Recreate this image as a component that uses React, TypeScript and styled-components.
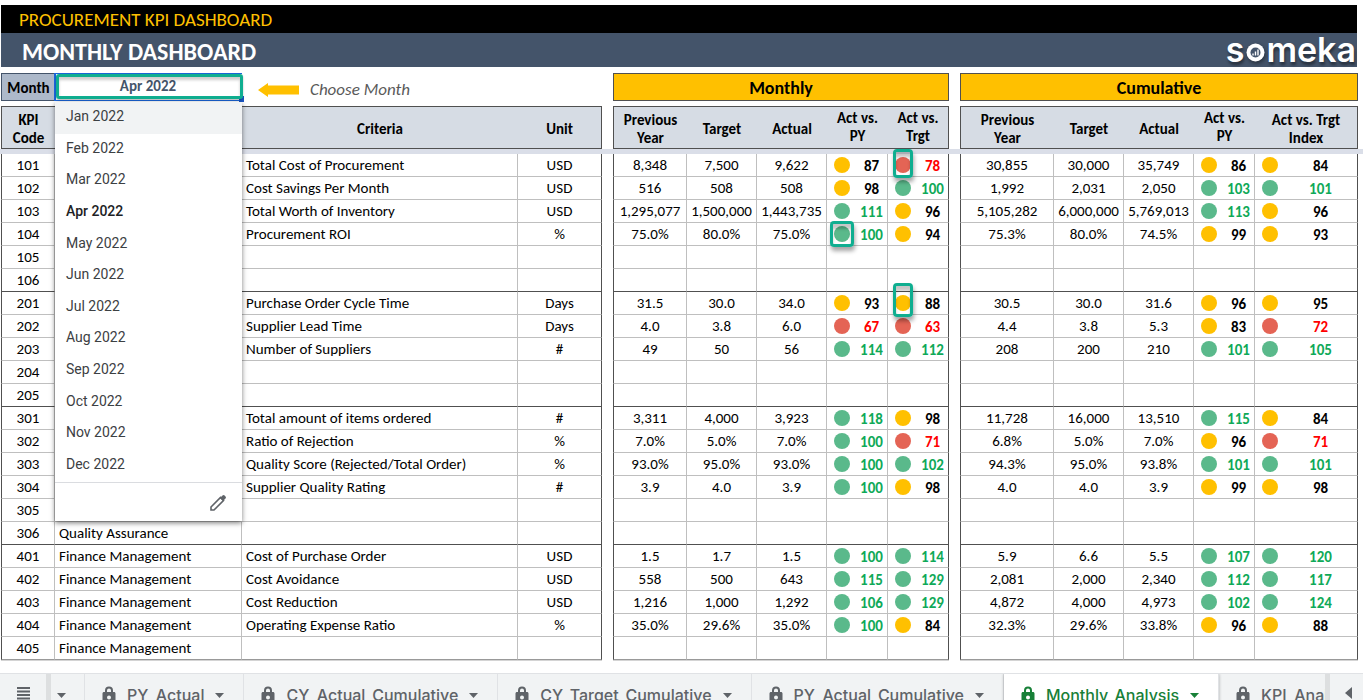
import React, { useState } from "react";
import styled, { createGlobalStyle, css } from "styled-components";

const GlobalStyle = createGlobalStyle`
  *, *::before, *::after { box-sizing: border-box; }
  body { margin: 0; background: #fff; }
  button, select { font: inherit; color: inherit; }
`;

const sheetFont = `Carlito, Calibri, Lato, "Open Sans", sans-serif`;
const line = "#bfbfbf";
const frame = "#505050";
const accent = "#0fae90";

const Page = styled.div`
  display: flex;
  flex-direction: column;
  height: 100vh;
  overflow: hidden;
  color: #000;
  font-family: ${sheetFont};
  font-size: 15px;
  line-height: 18px;
`;

const Banner = styled.header`
  margin: 5px 6px 0 1px;
  flex: none;
`;

const ProductBar = styled.div`
  display: flex;
  align-items: center;
  height: 28px;
  padding: 2px 18px 0;
  background: #000;
  color: #ffc000;
  font-size: 19px;
`;

const TitleBar = styled.div`
  display: flex;
  align-items: center;
  justify-content: space-between;
  height: 34px;
  padding-left: 21px;
  background: #44546a;
  color: #fff;
`;

const Title = styled.h1`
  margin: 0;
  padding-top: 4px;
  font-size: 24px;
  line-height: 30px;
`;

const Logo = styled.div`
  display: flex;
  align-items: center;
  padding-right: 1px;
  font: 600 34px/32px Inter, Lato, sans-serif;
  text-shadow: 1px 3px 3px rgba(0, 0, 0, 0.45);

  svg {
    margin: 4px 1px 0 2px;
    filter: drop-shadow(1px 2px 2px rgba(0, 0, 0, 0.45));
  }
`;

const Sheet = styled.main`
  display: grid;
  grid-template-columns: minmax(0, 601fr) minmax(0, 336fr) minmax(0, 398fr);
  column-gap: 11px;
  flex: none;
  margin-top: 6px;
  padding: 0 5px 0 1px;
  background: linear-gradient(#dadee8, #dadee8) 0 76px / 100% 5px no-repeat;
`;

const Panel = styled.section`
  display: flex;
  flex-direction: column;
  gap: 5px;
`;

const PanelTitle = styled.h2`
  display: flex;
  align-items: center;
  justify-content: center;
  height: 28px;
  margin: 0;
  padding-top: 1px;
  border: 1px solid ${frame};
  background: #ffc000;
  font-size: 18px;
`;

const Picker = styled.div`
  display: grid;
  grid-template-columns: 54fr 187fr 360fr;
  height: 28px;
`;

const MonthLabel = styled.label`
  display: flex;
  align-items: center;
  justify-content: center;
  padding-top: 1px;
  border: 1px solid #44546a;
  border-right: 0;
  background: #adb9ca;
  font-weight: 700;
`;

const MonthCell = styled.div`
  position: relative;
  z-index: 2;
  border: 1px solid #1a66d9;
  border-right: 0;
  box-shadow: -1px 0 #1a66d9;

  &::before {
    content: "";
    position: absolute;
    right: -2px;
    bottom: -2px;
    width: 5px;
    height: 6px;
    background: #1a56c4;
  }

  &::after {
    content: "";
    position: absolute;
    inset: 0 -1px 1px 0;
    border: 3px solid ${accent};
    border-radius: 3px;
    box-shadow: inset 0 3px 3px rgba(0, 0, 0, 0.2), 0 1px 2px rgba(0, 0, 0, 0.3);
    pointer-events: none;
  }
`;

const MonthSelect = styled.select`
  display: block;
  width: 100%;
  height: 24px;
  padding: 0 2px 0 0;
  border: 0;
  outline: 0;
  appearance: none;
  background: #fff;
  color: #44546a;
  font-weight: 700;
  text-align: center;
  text-align-last: center;
`;

const Popup = styled.div`
  position: absolute;
  z-index: 1;
  top: 28px;
  right: 0;
  left: -1px;
  background: #fff;
  box-shadow: 0 2px 5px rgba(0, 0, 0, 0.5);
`;

const Options = styled.ul`
  display: grid;
  grid-template-rows: repeat(12, 1fr);
  height: 381px;
  margin: 0;
  padding: 0 0 1px;
  border-bottom: 1px solid #dadce0;
  list-style: none;
`;

const Option = styled.button<{ $on: boolean; $hover: boolean }>`
  display: block;
  width: 100%;
  height: 100%;
  padding: 0 11px 3px;
  border: 0;
  background: ${(p) => (p.$hover ? "#f1f3f4" : "transparent")};
  color: ${(p) => (p.$on ? "#202124" : "#3c4043")};
  font: ${(p) => (p.$on ? 500 : 400)} 14px/20px Roboto, sans-serif;
  text-align: left;
`;

const PopupFooter = styled.div`
  display: flex;
  align-items: center;
  justify-content: flex-end;
  height: 38px;
  padding: 2px 15px 0 0;
`;

const IconButton = styled.button`
  display: flex;
  padding: 0;
  border: 0;
  background: none;
`;

const Hint = styled.div`
  display: flex;
  align-items: center;
  gap: 11px;
  padding: 6px 0 0 16px;
  color: #595959;
  font-size: 17px;
  font-style: italic;
`;

const Table = styled.table`
  width: 100%;
  table-layout: fixed;
  border-collapse: separate;
  border-spacing: 0;
`;

const HeadCell = styled.th<{ $raised?: boolean }>`
  height: 43px;
  padding: ${(p) => (p.$raised ? "0 6px 2px" : "2px 6px 0")};
  border: solid ${frame};
  border-width: 1px 0;
  background: #d6dce4;
  font-weight: 700;

  &:first-child { border-left-width: 1px; }
  &:last-child { border-right-width: 1px; }
`;

const FreezeCell = styled.td`
  height: 5px;
  padding: 0;
`;

type RowEnd = "none" | "group" | "last";

const Cell = styled.td<{ $end: RowEnd; $left?: boolean }>`
  height: 23px;
  padding: ${(p) => (p.$left ? "0 0 1px 4px" : "0 0 1px")};
  border-right: 1px solid ${line};
  border-bottom: 1px solid
    ${(p) => (p.$end === "group" ? frame : p.$end === "last" ? "#999" : line)};
  text-align: ${(p) => (p.$left ? "left" : "center")};
  white-space: nowrap;
  ${(p) => p.$end === "last" && css`box-shadow: 0 1px #d4d4d4;`}

  &:first-child { border-left: 1px solid ${frame}; }
  &:last-child { border-right-color: ${frame}; }
`;

const Score = styled.div<{ $tone: Tone }>`
  display: flex;
  align-items: center;
  padding: 2px 1px 0 0;
  color: ${(p) => ({ g: "#0fa958", y: "#000", r: "#f00" })[p.$tone]};
  font-weight: 700;
`;

const DotBox = styled.span`
  position: relative;
  display: flex;
  justify-content: center;
  flex: 0 0 30px;
  margin-top: -2px;
`;

const Dot = styled.span<{ $tone: Tone }>`
  width: 16px;
  height: 16px;
  border-radius: 50%;
  background: ${(p) => ({ g: "#5ab98b", y: "#ffc000", r: "#e46455" })[p.$tone]};
`;

const ScoreValue = styled.span`
  flex: 1;
`;

const Marker = styled.span<{ $kind: "tall" | "square" | "long" }>`
  position: absolute;
  z-index: 1;
  inset: ${(p) => ({ tall: "-8px 5px -5px", square: "-5px 3px", long: "-12px 5px -6px" })[p.$kind]};
  border: 3px solid ${accent};
  border-radius: 4px;
  box-shadow: inset 0 5px 3px rgba(0, 0, 0, 0.22), 1px 4px 4px rgba(0, 0, 0, 0.35);
`;

const TabStrip = styled.nav`
  display: flex;
  flex: none;
  margin-top: 13px;
  height: 42px;
  border-top: 1px solid #e0e2e5;
  background: #f1f3f4;
  color: #5f6368;
  font: 500 16px/20px Inter, Roboto, sans-serif;
`;

const MenuButton = styled.button`
  display: flex;
  flex: 0 0 51px;
  padding: 13px 0 0 17px;
  border: 0;
  border-right: 5px solid #dddfe0;
  background: none;
`;

const TabList = styled.div`
  display: flex;
  flex: 1;
  min-width: 0;
  overflow: hidden;
`;

const Tab = styled.button<{ $active?: boolean; $stub?: boolean }>`
  display: flex;
  flex: none;
  align-items: center;
  gap: 11px;
  padding: ${(p) => (p.$stub ? "1px 18px 0 6px" : "1px 19px 0 17px")};
  border: 0;
  border-right: 1px solid #e0e2e5;
  background: ${(p) => (p.$active ? "#fff" : "transparent")};
  color: ${(p) => (p.$active ? "#188038" : "inherit")};
  box-shadow: ${(p) => (p.$active ? "0 0 3px rgba(0, 0, 0, 0.3)" : "none")};
  white-space: nowrap;
`;

const ScrollButton = styled.button`
  display: flex;
  flex: 0 0 38px;
  padding: 12px 0 0 15px;
  border: 0;
  border-left: 5px solid #dddfe0;
  background: none;
`;

type Tone = "g" | "y" | "r";

const months = ["Jan", "Feb", "Mar", "Apr", "May", "Jun", "Jul", "Aug", "Sep", "Oct", "Nov", "Dec"].map(
  (m) => `${m} 2022`,
);

interface Kpi {
  code: number;
  category: string;
  criteria: string;
  unit: string;
  monthly: string[];
  cumulative: string[];
}

const kpi = (code: number, category = "", criteria = "", unit = "", monthly = "", cumulative = ""): Kpi => ({
  code,
  category,
  criteria,
  unit,
  monthly: monthly ? monthly.split(" ") : ["", "", "", "", ""],
  cumulative: cumulative ? cumulative.split(" ") : ["", "", "", "", ""],
});

const finance = "Finance Management";

const rows: Kpi[] = [
  kpi(101, "", "Total Cost of Procurement", "USD", "8,348 7,500 9,622 y87 r78", "30,855 30,000 35,749 y86 y84"),
  kpi(102, "", "Cost Savings Per Month", "USD", "516 508 508 y98 g100", "1,992 2,031 2,050 g103 g101"),
  kpi(103, "", "Total Worth of Inventory", "USD", "1,295,077 1,500,000 1,443,735 g111 y96", "5,105,282 6,000,000 5,769,013 g113 y96"),
  kpi(104, "", "Procurement ROI", "%", "75.0% 80.0% 75.0% g100 y94", "75.3% 80.0% 74.5% y99 y93"),
  kpi(105),
  kpi(106),
  kpi(201, "", "Purchase Order Cycle Time", "Days", "31.5 30.0 34.0 y93 y88", "30.5 30.0 31.6 y96 y95"),
  kpi(202, "", "Supplier Lead Time", "Days", "4.0 3.8 6.0 r67 r63", "4.4 3.8 5.3 y83 r72"),
  kpi(203, "", "Number of Suppliers", "#", "49 50 56 g114 g112", "208 200 210 g101 g105"),
  kpi(204),
  kpi(205),
  kpi(301, "", "Total amount of items ordered", "#", "3,311 4,000 3,923 g118 y98", "11,728 16,000 13,510 g115 y84"),
  kpi(302, "", "Ratio of Rejection", "%", "7.0% 5.0% 7.0% g100 r71", "6.8% 5.0% 7.0% y96 r71"),
  kpi(303, "", "Quality Score (Rejected/Total Order)", "%", "93.0% 95.0% 93.0% g100 g102", "94.3% 95.0% 93.8% g101 g101"),
  kpi(304, "", "Supplier Quality Rating", "#", "3.9 4.0 3.9 g100 y98", "4.0 4.0 3.9 y99 y98"),
  kpi(305),
  kpi(306, "Quality Assurance"),
  kpi(401, finance, "Cost of Purchase Order", "USD", "1.5 1.7 1.5 g100 g114", "5.9 6.6 5.5 g107 g120"),
  kpi(402, finance, "Cost Avoidance", "USD", "558 500 643 g115 g129", "2,081 2,000 2,340 g112 g117"),
  kpi(403, finance, "Cost Reduction", "USD", "1,216 1,000 1,292 g106 g129", "4,872 4,000 4,973 g102 g124"),
  kpi(404, finance, "Operating Expense Ratio", "%", "35.0% 29.6% 35.0% g100 y84", "32.3% 29.6% 33.8% y96 y88"),
  kpi(405, finance),
];

const markers: Record<string, "tall" | "square" | "long"> = {
  "101-4": "tall",
  "104-3": "square",
  "201-4": "long",
};

const rowEnd = (code: number): RowEnd =>
  code === 405 ? "last" : [106, 205, 306].includes(code) ? "group" : "none";

const tabs = [
  { name: "PY_Actual" },
  { name: "CY_Actual_Cumulative" },
  { name: "CY_Target_Cumulative" },
  { name: "PY_Actual_Cumulative" },
  { name: "Monthly_Analysis", active: true },
  { name: "KPI_Analysis" },
];

function Columns({ widths }: { widths: number[] }) {
  const total = widths.reduce((a, b) => a + b, 0);
  return (
    <colgroup>
      {widths.map((w, i) => (
        <col key={i} style={{ width: `${(w / total) * 100}%` }} />
      ))}
    </colgroup>
  );
}

function ValuesTable({ label, field, widths, last }: {
  label: string;
  field: "monthly" | "cumulative";
  widths: number[];
  last: React.ReactNode;
}) {
  return (
    <Table aria-label={label}>
      <Columns widths={widths} />
      <thead>
        <tr>
          <HeadCell scope="col">Previous Year</HeadCell>
          <HeadCell scope="col">Target</HeadCell>
          <HeadCell scope="col">Actual</HeadCell>
          <HeadCell scope="col" $raised>Act vs. PY</HeadCell>
          {last}
        </tr>
      </thead>
      <tbody>
        <tr><FreezeCell colSpan={5} /></tr>
        {rows.map((row) => (
          <tr key={row.code}>
            {row[field].map((value, i) => {
              const marker = field === "monthly" ? markers[`${row.code}-${i}`] : undefined;
              const tone = value[0] as Tone;
              return (
                <Cell key={i} $end={rowEnd(row.code)}>
                  {i < 3 || !value ? value : (
                    <Score $tone={tone}>
                      <DotBox>
                        <Dot $tone={tone} />
                        {marker && <Marker $kind={marker} />}
                      </DotBox>
                      <ScoreValue>{value.slice(1)}</ScoreValue>
                    </Score>
                  )}
                </Cell>
              );
            })}
          </tr>
        ))}
      </tbody>
    </Table>
  );
}

const LockIcon = () => (
  <svg width="14" height="18" viewBox="0 0 14 18" fill="currentColor" aria-hidden="true">
    <path fillRule="evenodd" d="M3 6V4.500a4 4 0 0 1 8 0V6h.8C13 6 13.500 6.600 13.500 7.600v8.200c0 1-.6 1.700-1.700 1.700H2.200C1.100 17.500.5 16.800.5 15.800V7.600C.5 6.600 1 6 2.200 6zM5 6h4V4.600a2 2 0 0 0-4 0zM7 9.600a2 2 0 1 0 0 4 2 2 0 0 0 0-4z" />
  </svg>
);

const CaretIcon = () => (
  <svg width="9" height="5" viewBox="0 0 9 5" fill="currentColor" aria-hidden="true">
    <path d="M0 0h9L4.500 5z" />
  </svg>
);

export default function App() {
  const [month, setMonth] = useState("Apr 2022");

  return (
    <Page>
      <GlobalStyle />
      <Banner>
        <ProductBar>PROCUREMENT KPI DASHBOARD</ProductBar>
        <TitleBar>
          <Title>MONTHLY DASHBOARD</Title>
          <Logo>
            <span>s</span>
            <svg width="19" height="19" viewBox="0 0 19 19" aria-hidden="true">
              <circle cx="9.500" cy="9.500" r="9" fill="#fff" />
              <circle cx="9.500" cy="9.500" r="5" fill="#44546a" />
              <path d="M7 12.500v-2M9.500 12.500V8.500M12 12.500V6.500" stroke="#fff" strokeWidth="1.400" />
            </svg>
            <span>meka</span>
          </Logo>
        </TitleBar>
      </Banner>

      <Sheet>
        <Panel>
          <Picker>
            <MonthLabel htmlFor="month">Month</MonthLabel>
            <MonthCell>
              <MonthSelect id="month" value={month} onChange={(e) => setMonth(e.target.value)}>
                {months.map((m) => <option key={m}>{m}</option>)}
              </MonthSelect>
              <Popup>
                <Options>
                  {months.map((m, i) => (
                    <li key={m}>
                      <Option type="button" $on={m === month} $hover={i === 0} onClick={() => setMonth(m)}>
                        {m}
                      </Option>
                    </li>
                  ))}
                </Options>
                <PopupFooter>
                  <IconButton type="button" aria-label="Edit list">
                    <svg width="18" height="18" viewBox="0 0 18 18" aria-hidden="true">
                      <path d="M2 16v-3L11.500 3.500l3 3L5 16z" fill="none" stroke="#5f6368" strokeWidth="1.600" />
                      <path d="M11 4l2.500-2.500c.7-.7 1.500-.7 2.100 0l.9.9c.6.6.6 1.400 0 2.100L14 7z" fill="#5f6368" />
                    </svg>
                  </IconButton>
                </PopupFooter>
              </Popup>
            </MonthCell>
            <Hint>
              <svg width="41" height="14" viewBox="0 0 41 14" fill="#ffc000" aria-hidden="true">
                <path d="M0 7L10 0v2.500h31v9H10V14z" />
              </svg>
              Choose Month
            </Hint>
          </Picker>
          <Table aria-label="KPI definitions">
            <Columns widths={[54, 187, 276, 84]} />
            <thead>
              <tr>
                <HeadCell scope="col">KPI Code</HeadCell>
                <HeadCell scope="col" aria-label="Category" />
                <HeadCell scope="col">Criteria</HeadCell>
                <HeadCell scope="col">Unit</HeadCell>
              </tr>
            </thead>
            <tbody>
              <tr><FreezeCell colSpan={4} /></tr>
              {rows.map((row) => {
                const end = rowEnd(row.code);
                return (
                  <tr key={row.code}>
                    <Cell $end={end}>{row.code}</Cell>
                    <Cell $end={end} $left>{row.category}</Cell>
                    <Cell $end={end} $left>{row.criteria}</Cell>
                    <Cell $end={end}>{row.unit}</Cell>
                  </tr>
                );
              })}
            </tbody>
          </Table>
        </Panel>

        <Panel>
          <PanelTitle>Monthly</PanelTitle>
          <ValuesTable
            label="Monthly"
            field="monthly"
            widths={[74, 70, 70, 61, 61]}
            last={<HeadCell scope="col" $raised>Act vs. Trgt</HeadCell>}
          />
        </Panel>

        <Panel>
          <PanelTitle>Cumulative</PanelTitle>
          <ValuesTable
            label="Cumulative"
            field="cumulative"
            widths={[94, 70, 70, 61, 103]}
            last={<HeadCell scope="col">Act vs. Trgt Index</HeadCell>}
          />
        </Panel>
      </Sheet>

      <TabStrip aria-label="Sheets">
        <MenuButton type="button" aria-label="All sheets">
          <svg width="13" height="13" viewBox="0 0 13 13" aria-hidden="true">
            <path d="M0 1h13M0 4.500h13M0 8h13M0 11.500h13" stroke="#5f6368" strokeWidth="2" />
          </svg>
        </MenuButton>
        <TabList>
          <Tab type="button" $stub aria-label="Previous sheet options"><CaretIcon /></Tab>
          {tabs.map((t) => (
            <Tab type="button" key={t.name} $active={t.active}>
              <LockIcon />
              {t.name}
              <CaretIcon />
            </Tab>
          ))}
        </TabList>
        <ScrollButton type="button" aria-label="Scroll tabs left">
          <svg width="7" height="14" viewBox="0 0 7 14" aria-hidden="true">
            <path d="M7 1v12L0 7z" fill="#5f6368" />
          </svg>
        </ScrollButton>
      </TabStrip>
    </Page>
  );
}
